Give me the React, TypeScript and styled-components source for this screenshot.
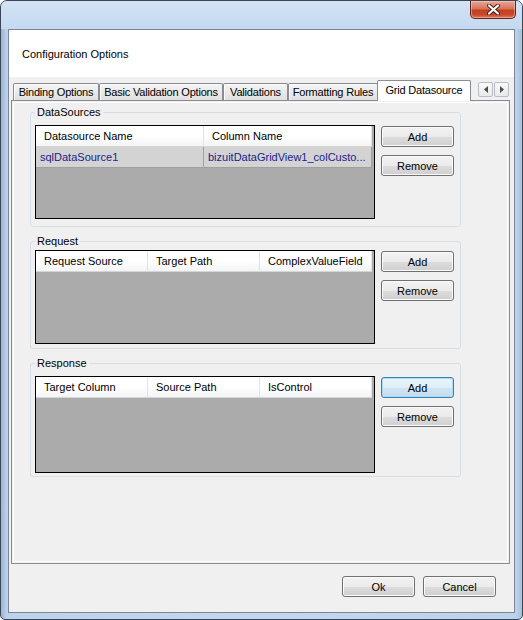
import styled, { createGlobalStyle, css } from "styled-components";

const GlobalStyle = createGlobalStyle`
  html, body {
    margin: 0;
    padding: 0;
    background: #ffffff;
  }
  body {
    font-family: "Liberation Sans", Arial, sans-serif;
    font-size: 11px;
    color: #000;
  }
`;

const Window = styled.div`
  width: 523px;
  height: 620px;
  box-sizing: border-box;
  border: 1px solid #3a4656;
  border-radius: 7px 7px 5px 5px;
  background: linear-gradient(90deg, #9db5d2 0px, #bcd3ec 6px, #c3d8ef 50%, #bcd3ec calc(100% - 6px), #a9c0da 100%);
  display: flex;
  flex-direction: column;
  overflow: hidden;
`;

const TitleBar = styled.div`
  height: 28px;
  display: flex;
  justify-content: flex-end;
  align-items: flex-start;
  padding-right: 6px;
  background: linear-gradient(180deg, #d3e3f4 0%, #c4d9f0 100%);
`;

const CloseButton = styled.div`
  width: 46px;
  height: 18px;
  box-sizing: border-box;
  border: 1px solid #5c2619;
  border-top: none;
  border-radius: 0 0 5px 5px;
  background: linear-gradient(180deg, #e9a896 0%, #d7735c 45%, #c4401f 55%, #c9472a 80%, #de7a5c 100%);
  box-shadow: inset 0 0 0 1px rgba(255, 220, 210, 0.45);
  display: flex;
  align-items: center;
  justify-content: center;
`;

const Client = styled.div`
  flex: 1;
  margin: 0 7px 6px 7px;
  border: 1px solid #7b8696;
  background: #f0f0f0;
  display: flex;
  flex-direction: column;
`;

const Header = styled.div`
  height: 47px;
  background: #ffffff;
  padding-left: 13px;
  display: flex;
  align-items: center;
`;

const Body = styled.div`
  flex: 1;
  display: flex;
  flex-direction: column;
  padding: 3px 4px 15px 2px;
`;

const TabStrip = styled.div`
  height: 21px;
  display: flex;
  align-items: flex-end;
  padding-left: 2px;
  margin-bottom: -1px;
  position: relative;
  z-index: 1;
`;

const Tab = styled.div<{ $w: number; $active?: boolean }>`
  width: ${(p) => p.$w}px;
  height: 17px;
  margin-bottom: 1px;
  box-sizing: border-box;
  border: 1px solid #898c95;
  border-bottom: none;
  border-radius: 2px 2px 0 0;
  background: linear-gradient(180deg, #f5f5f5 0%, #e9e9e9 50%, #e0e0e0 100%);
  box-shadow: inset 1px 1px 0 #fbfbfb;
  display: flex;
  align-items: center;
  justify-content: center;
  white-space: nowrap;
  letter-spacing: -0.2px;
  ${(p) =>
    p.$active &&
    css`
      height: 21px;
      margin: 0 0 0 -1px;
      background: #ffffff;
      box-shadow: none;
      padding-bottom: 2px;
    `}
`;

const ScrollArrows = styled.div`
  margin-left: auto;
  align-self: flex-start;
  margin-top: 2px;
  margin-right: 1px;
  display: flex;
  gap: 1px;
`;

const ArrowBox = styled.div`
  width: 15px;
  height: 15px;
  box-sizing: border-box;
  border: 1px solid #b9bec6;
  border-radius: 2px;
  background: linear-gradient(180deg, #fafafa 0%, #e9e9e9 100%);
  display: flex;
  align-items: center;
  justify-content: center;
`;

const Panel = styled.div`
  flex: 1;
  border: 1px solid #898c95;
  background: #f0f0f0;
  box-shadow: inset 0 0 0 1px #f0f0f0, inset 0 0 0 2px #ffffff;
  padding: 5px 0 0 18px;
  display: flex;
  flex-direction: column;
  gap: 8px;
`;

const Group = styled.fieldset<{ $pt: number; $pb: number }>`
  margin: 0;
  width: 431px;
  min-width: 0;
  box-sizing: border-box;
  border: 1px solid #d5dfe5;
  border-radius: 3px;
  padding: ${(p) => p.$pt}px 6px ${(p) => p.$pb}px 4px;
  display: flex;
  gap: 6px;
  align-items: flex-start;
`;

const Legend = styled.legend`
  padding: 0 2px;
  line-height: 13px;
  font-size: 11px;
  color: #000;
`;

const GridBox = styled.div<{ $h: number }>`
  width: 340px;
  height: ${(p) => p.$h}px;
  box-sizing: border-box;
  border: 1px solid #000000;
  background: #ababab;
`;

const Row = styled.div`
  display: flex;
`;

const HeaderCell = styled.div<{ $w: number }>`
  width: ${(p) => p.$w}px;
  height: 21px;
  box-sizing: border-box;
  padding-left: 8px;
  line-height: 21px;
  background: linear-gradient(180deg, #ffffff 0%, #ffffff 50%, #f3f4f6 100%);
  border-right: 1px solid #e2e3e6;
  border-bottom: 1px solid #d5d5d5;
  white-space: nowrap;
  overflow: hidden;
`;

const Cell = styled.div<{ $w: number }>`
  width: ${(p) => p.$w}px;
  height: 21px;
  box-sizing: border-box;
  padding-left: 4px;
  line-height: 20px;
  background: #d3d3d3;
  color: #1c1c8e;
  border-right: 1px solid #a0a0a0;
  border-bottom: 1px solid #a0a0a0;
  white-space: nowrap;
  overflow: hidden;
`;

const ButtonColumn = styled.div`
  display: flex;
  flex-direction: column;
  gap: 8px;
  margin-top: 1px;
`;

const Button = styled.button<{ $focused?: boolean }>`
  width: 73px;
  height: 21px;
  box-sizing: border-box;
  padding: 0;
  border: 1px solid #707070;
  border-radius: 3px;
  background: linear-gradient(180deg, #f2f2f2 0%, #ebebeb 50%, #dddddd 51%, #cfcfcf 100%);
  box-shadow: inset 0 0 0 1px #fbfbfb;
  font-family: "Liberation Sans", Arial, sans-serif;
  font-size: 11px;
  color: #000;
  ${(p) =>
    p.$focused &&
    css`
      border-color: #3c7fb1;
      box-shadow: inset 0 0 0 1px #a8dcf6;
      background: linear-gradient(180deg, #eaf5fb 0%, #e0eef7 50%, #cfe5f3 51%, #c3dcee 100%);
    `}
`;

const Footer = styled.div`
  display: flex;
  justify-content: flex-end;
  gap: 8px;
  margin-top: 12px;
  margin-right: 14px;
`;

type Col = { title: string; w: number };

const groups: {
  title: string;
  cols: Col[];
  rows: string[][];
  h: number;
  pt: number;
  pb: number;
  focused?: boolean;
}[] = [
  {
    title: "DataSources",
    cols: [
      { title: "Datasource Name", w: 168 },
      { title: "Column Name", w: 168 },
    ],
    rows: [["sqlDataSource1", "bizuitDataGridView1_colCusto..."]],
    h: 94,
    pt: 6,
    pb: 7,
  },
  {
    title: "Request",
    cols: [
      { title: "Request Source", w: 112 },
      { title: "Target Path", w: 112 },
      { title: "ComplexValueField", w: 112 },
    ],
    rows: [],
    h: 94,
    pt: 2,
    pb: 4,
  },
  {
    title: "Response",
    cols: [
      { title: "Target Column", w: 112 },
      { title: "Source Path", w: 112 },
      { title: "IsControl", w: 112 },
    ],
    rows: [],
    h: 97,
    pt: 6,
    pb: 3,
    focused: true,
  },
];

const tabs = [
  { title: "Binding Options", w: 86 },
  { title: "Basic Validation Options", w: 124 },
  { title: "Validations", w: 65 },
  { title: "Formatting Rules", w: 90 },
];

function App() {
  return (
    <>
      <GlobalStyle />
      <Window>
        <TitleBar>
          <CloseButton>
            <svg width="13" height="11" viewBox="0 0 13 11">
              <path d="M2 1.5 L11 9.5 M11 1.5 L2 9.5" stroke="#4a1d12" strokeWidth="4" strokeLinecap="round" />
              <path d="M2 1.5 L11 9.5 M11 1.5 L2 9.5" stroke="#ffffff" strokeWidth="2.2" strokeLinecap="round" />
            </svg>
          </CloseButton>
        </TitleBar>
        <Client>
          <Header>Configuration Options</Header>
          <Body>
            <TabStrip>
              {tabs.map((t) => (
                <Tab key={t.title} $w={t.w}>
                  {t.title}
                </Tab>
              ))}
              <Tab $w={94} $active>
                Grid Datasource
              </Tab>
              <ScrollArrows>
                <ArrowBox>
                  <svg width="4" height="7" viewBox="0 0 4 7">
                    <path d="M4 0 L0 3.5 L4 7 Z" fill="#4d4d4d" />
                  </svg>
                </ArrowBox>
                <ArrowBox>
                  <svg width="4" height="7" viewBox="0 0 4 7">
                    <path d="M0 0 L4 3.5 L0 7 Z" fill="#4d4d4d" />
                  </svg>
                </ArrowBox>
              </ScrollArrows>
            </TabStrip>
            <Panel>
              {groups.map((g) => (
                <Group key={g.title} $pt={g.pt} $pb={g.pb}>
                  <Legend>{g.title}</Legend>
                  <GridBox $h={g.h}>
                    <Row>
                      {g.cols.map((c) => (
                        <HeaderCell key={c.title} $w={c.w}>
                          {c.title}
                        </HeaderCell>
                      ))}
                    </Row>
                    {g.rows.map((r, i) => (
                      <Row key={i}>
                        {r.map((v, j) => (
                          <Cell key={j} $w={g.cols[j].w}>
                            {v}
                          </Cell>
                        ))}
                      </Row>
                    ))}
                  </GridBox>
                  <ButtonColumn>
                    <Button $focused={g.focused}>Add</Button>
                    <Button>Remove</Button>
                  </ButtonColumn>
                </Group>
              ))}
            </Panel>
            <Footer>
              <Button>Ok</Button>
              <Button>Cancel</Button>
            </Footer>
          </Body>
        </Client>
      </Window>
    </>
  );
}

export default App;
